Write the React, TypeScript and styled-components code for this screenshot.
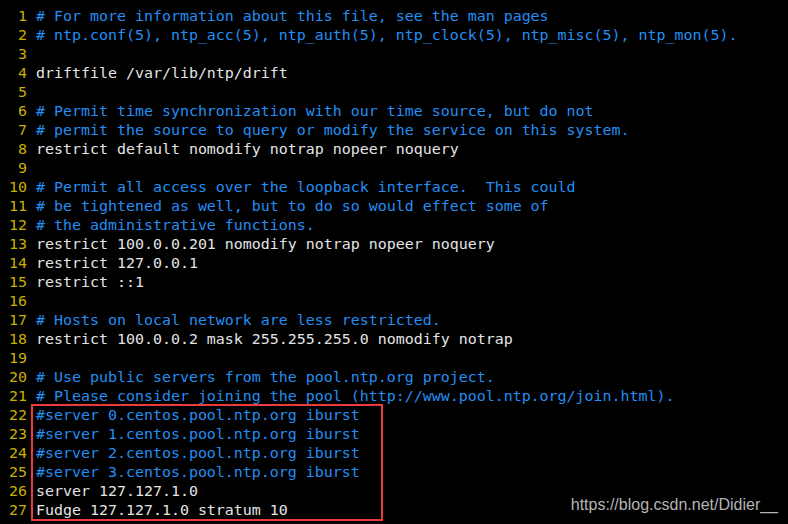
import React from "react";
import styled, { createGlobalStyle } from "styled-components";

const Global = createGlobalStyle`
  html, body { margin: 0; padding: 0; background: #000; }
  body { width: 788px; height: 524px; overflow: hidden; }
`;

const Screen = styled.div`
  position: relative;
  width: 788px;
  height: 524px;
  background: #000;
  box-sizing: border-box;
  padding-top: 7px;
  font-family: "DejaVu Sans Mono", monospace;
  font-size: 14.95px;
  line-height: 19px;
`;

const Row = styled.div`
  display: flex;
  height: 19px;
  white-space: pre;
`;

const Num = styled.span`
  width: 27px;
  margin-right: 9px;
  text-align: right;
  color: #c8b000;
  flex: none;
`;

const Code = styled.span<{ $comment: boolean }>`
  color: ${(p) => (p.$comment ? "#248ef2" : "#e4e4e4")};
`;

const Highlight = styled.div`
  position: absolute;
  left: 31px;
  top: 404px;
  width: 352px;
  height: 117px;
  box-sizing: border-box;
  border: 2px solid #ec3a3f;
  pointer-events: none;
`;

const Watermark = styled.div`
  position: absolute;
  right: 10px;
  bottom: 10px;
  font-family: "Liberation Sans", Arial, sans-serif;
  font-size: 16px;
  line-height: 18px;
  color: #b4b4b4;
`;

const lines: string[] = [
  "# For more information about this file, see the man pages",
  "# ntp.conf(5), ntp_acc(5), ntp_auth(5), ntp_clock(5), ntp_misc(5), ntp_mon(5).",
  "",
  "driftfile /var/lib/ntp/drift",
  "",
  "# Permit time synchronization with our time source, but do not",
  "# permit the source to query or modify the service on this system.",
  "restrict default nomodify notrap nopeer noquery",
  "",
  "# Permit all access over the loopback interface.  This could",
  "# be tightened as well, but to do so would effect some of",
  "# the administrative functions.",
  "restrict 100.0.0.201 nomodify notrap nopeer noquery",
  "restrict 127.0.0.1",
  "restrict ::1",
  "",
  "# Hosts on local network are less restricted.",
  "restrict 100.0.0.2 mask 255.255.255.0 nomodify notrap",
  "",
  "# Use public servers from the pool.ntp.org project.",
  "# Please consider joining the pool (http://www.pool.ntp.org/join.html).",
  "#server 0.centos.pool.ntp.org iburst",
  "#server 1.centos.pool.ntp.org iburst",
  "#server 2.centos.pool.ntp.org iburst",
  "#server 3.centos.pool.ntp.org iburst",
  "server 127.127.1.0",
  "Fudge 127.127.1.0 stratum 10",
];

export default function App() {
  return (
    <>
      <Global />
      <Screen>
        {lines.map((l, i) => (
          <Row key={i}>
            <Num>{i + 1}</Num>
            <Code $comment={l.startsWith("#")}>{l}</Code>
          </Row>
        ))}
        <Highlight />
        <Watermark>https://blog.csdn.net/Didier__</Watermark>
      </Screen>
    </>
  );
}
